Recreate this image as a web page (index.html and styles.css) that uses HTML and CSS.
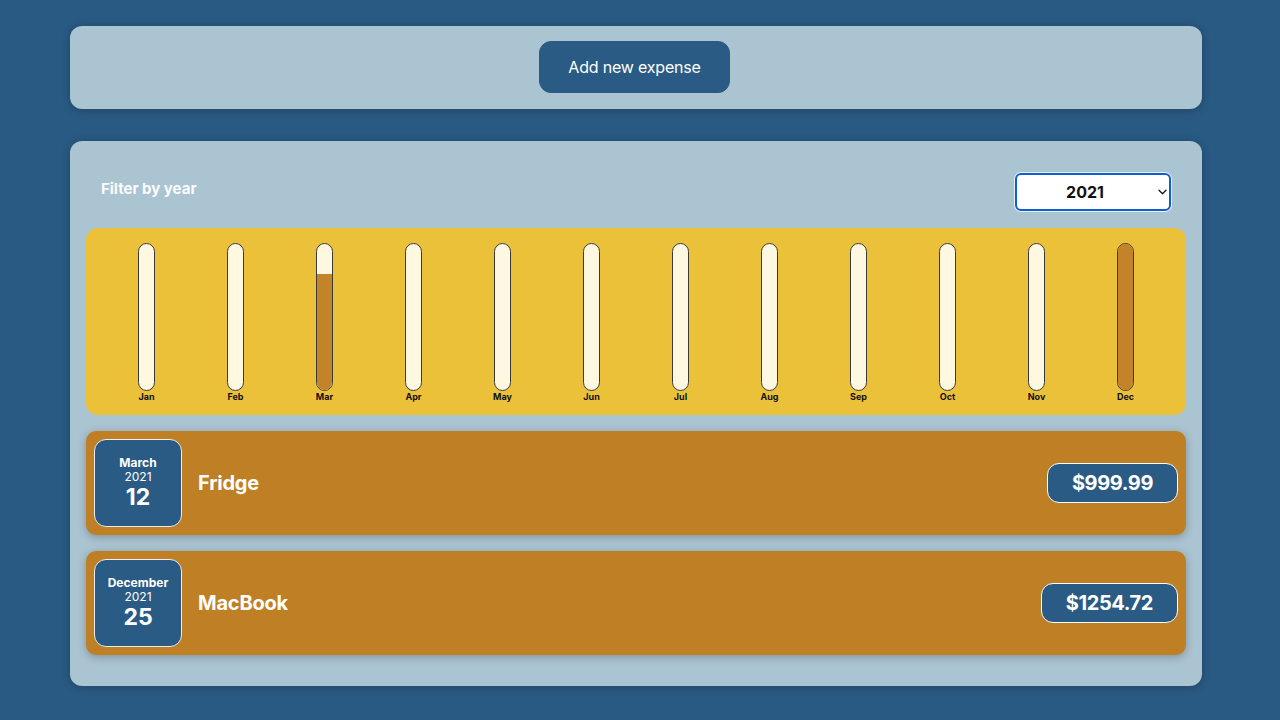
FILE: index.html
```html
<!DOCTYPE html>
<html lang="en">
<head>
<meta charset="utf-8">
<title>Expenses</title>
<link rel="stylesheet" href="styles.css">
</head>
<body>
<div class="new-expense">
  <button class="add-btn" type="button">Add new expense</button>
</div>
<div class="expenses">
  <div class="filter">
    <div class="filter-control">
      <label class="filter-label">Filter by year</label>
      <div class="select-wrap">
        <select class="year-select">
          <option>2022</option>
          <option selected>2021</option>
          <option>2020</option>
          <option>2019</option>
        </select>
        <svg class="chev" width="9" height="6" viewBox="0 0 9 6"><path d="M1 1.2l3.5 3.5 3.5-3.5" fill="none" stroke="#111" stroke-width="1.3" stroke-linecap="round" stroke-linejoin="round"/></svg>
      </div>
    </div>
  </div>
  <div class="chart">
    <div class="bar"><div class="bar-inner"><div class="bar-fill" style="height:0%"></div></div><div class="bar-label">Jan</div></div>
    <div class="bar"><div class="bar-inner"><div class="bar-fill" style="height:0%"></div></div><div class="bar-label">Feb</div></div>
    <div class="bar"><div class="bar-inner"><div class="bar-fill" style="height:79.7%"></div></div><div class="bar-label">Mar</div></div>
    <div class="bar"><div class="bar-inner"><div class="bar-fill" style="height:0%"></div></div><div class="bar-label">Apr</div></div>
    <div class="bar"><div class="bar-inner"><div class="bar-fill" style="height:0%"></div></div><div class="bar-label">May</div></div>
    <div class="bar"><div class="bar-inner"><div class="bar-fill" style="height:0%"></div></div><div class="bar-label">Jun</div></div>
    <div class="bar"><div class="bar-inner"><div class="bar-fill" style="height:0%"></div></div><div class="bar-label">Jul</div></div>
    <div class="bar"><div class="bar-inner"><div class="bar-fill" style="height:0%"></div></div><div class="bar-label">Aug</div></div>
    <div class="bar"><div class="bar-inner"><div class="bar-fill" style="height:0%"></div></div><div class="bar-label">Sep</div></div>
    <div class="bar"><div class="bar-inner"><div class="bar-fill" style="height:0%"></div></div><div class="bar-label">Oct</div></div>
    <div class="bar"><div class="bar-inner"><div class="bar-fill" style="height:0%"></div></div><div class="bar-label">Nov</div></div>
    <div class="bar"><div class="bar-inner"><div class="bar-fill" style="height:100%"></div></div><div class="bar-label">Dec</div></div>
  </div>
  <div class="item">
    <div class="date">
      <div class="date-month">March</div>
      <div class="date-year">2021</div>
      <div class="date-day">12</div>
    </div>
    <div class="desc"><h2 class="title">Fridge</h2></div>
    <div class="price">$999.99</div>
  </div>
  <div class="item">
    <div class="date">
      <div class="date-month">December</div>
      <div class="date-year">2021</div>
      <div class="date-day">25</div>
    </div>
    <div class="desc"><h2 class="title">MacBook</h2></div>
    <div class="price">$1254.72</div>
  </div>
</div>
</body>
</html>
```
FILE: styles.css
```css
* { box-sizing: border-box; }
html, body { margin: 0; padding: 0; }
body {
  background: #295a83;
  font-family: Inter, "Noto Sans", "Liberation Sans", sans-serif;
  padding: 26px 78px 30px 70px;
}
.new-expense {
  background: #abc4d1;
  padding: 15px 16px 16px;
  border-radius: 12px;
  text-align: center;
  box-shadow: 0 1px 8px rgba(0,0,0,0.25);
  margin-bottom: 32px;
}
.add-btn {
  font: inherit;
  font-size: 16px;
  line-height: 20px;
  padding: 15px 28px;
  border: 1px solid #2a5b84;
  background: #2a5b84;
  color: #fff;
  border-radius: 12px;
  white-space: nowrap;
  letter-spacing: -0.2px;
  margin-left: -3px;
}
.expenses {
  background: #abc4d1;
  padding: 16px 16px 15px;
  border-radius: 12px;
  box-shadow: 0 1px 8px rgba(0,0,0,0.25);
}
.filter { padding: 0 15px; color: #fff; }
.filter-control {
  display: flex;
  align-items: center;
  justify-content: space-between;
  margin: 16px 0 17px;
}
.filter-label {
  font-weight: 700;
  font-size: 15px;
  margin-bottom: 8px;
  color: #fbfdfe;
}
.select-wrap { position: relative; }
.year-select {
  appearance: none;
  -webkit-appearance: none;
  font: inherit;
  font-weight: 700;
  font-size: 16px;
  color: #111;
  width: 156px;
  height: 38px;
  padding: 0 28px 0 12px;
  text-align: center;
  text-align-last: center;
  background: #fff;
  border: 2px solid #0f5fcf;
  border-radius: 6px;
  box-shadow: 0 0 0 1px #e6eef6;
}
.chev { position: absolute; right: 4px; top: 16px; }
.chart {
  background: #ecc13a;
  border-radius: 12px;
  padding: 15px 16px 12px;
  height: 187px;
  display: flex;
  justify-content: space-around;
}
.bar {
  width: 17px;
  height: 160px;
  display: flex;
  flex-direction: column;
  align-items: center;
}
.bar-inner {
  flex: 1;
  width: 100%;
  border: 1px solid #3a3a3a;
  border-radius: 12px;
  background: #fff8e1;
  overflow: hidden;
  display: flex;
  flex-direction: column;
  justify-content: flex-end;
}
.bar-fill { background: #c38328; width: 100%; }
.bar-label {
  font-weight: 700;
  font-size: 9px;
  line-height: 12px;
  color: #111;
}
.item {
  display: flex;
  align-items: center;
  justify-content: space-between;
  background: #bf8025;
  padding: 8px;
  margin: 16px 0;
  border-radius: 10px;
  box-shadow: 0 2px 8px rgba(0,0,0,0.25);
}
.date {
  width: 88px;
  height: 88px;
  display: flex;
  flex-direction: column;
  align-items: center;
  justify-content: center;
  background: #2a5b84;
  border: 1px solid #ececec;
  border-radius: 12px;
  color: #fff;
}
.date-month { font-size: 12px; font-weight: 700; line-height: 14px; }
.date-year { font-size: 12px; line-height: 14px; }
.date-day { font-size: 23px; font-weight: 700; line-height: 27px; }
.desc { flex: 1; display: flex; align-items: center; }
.title {
  font-size: 20px;
  font-weight: 700;
  margin: 0 16px;
  color: #fff;
  letter-spacing: -0.2px;
}
.price {
  font-size: 20px;
  font-weight: 700;
  line-height: 22px;
  color: #fff;
  background: #2a5b84;
  border: 1px solid #fff;
  padding: 8px 24px;
  border-radius: 12px;
  letter-spacing: -0.4px;
}
```
